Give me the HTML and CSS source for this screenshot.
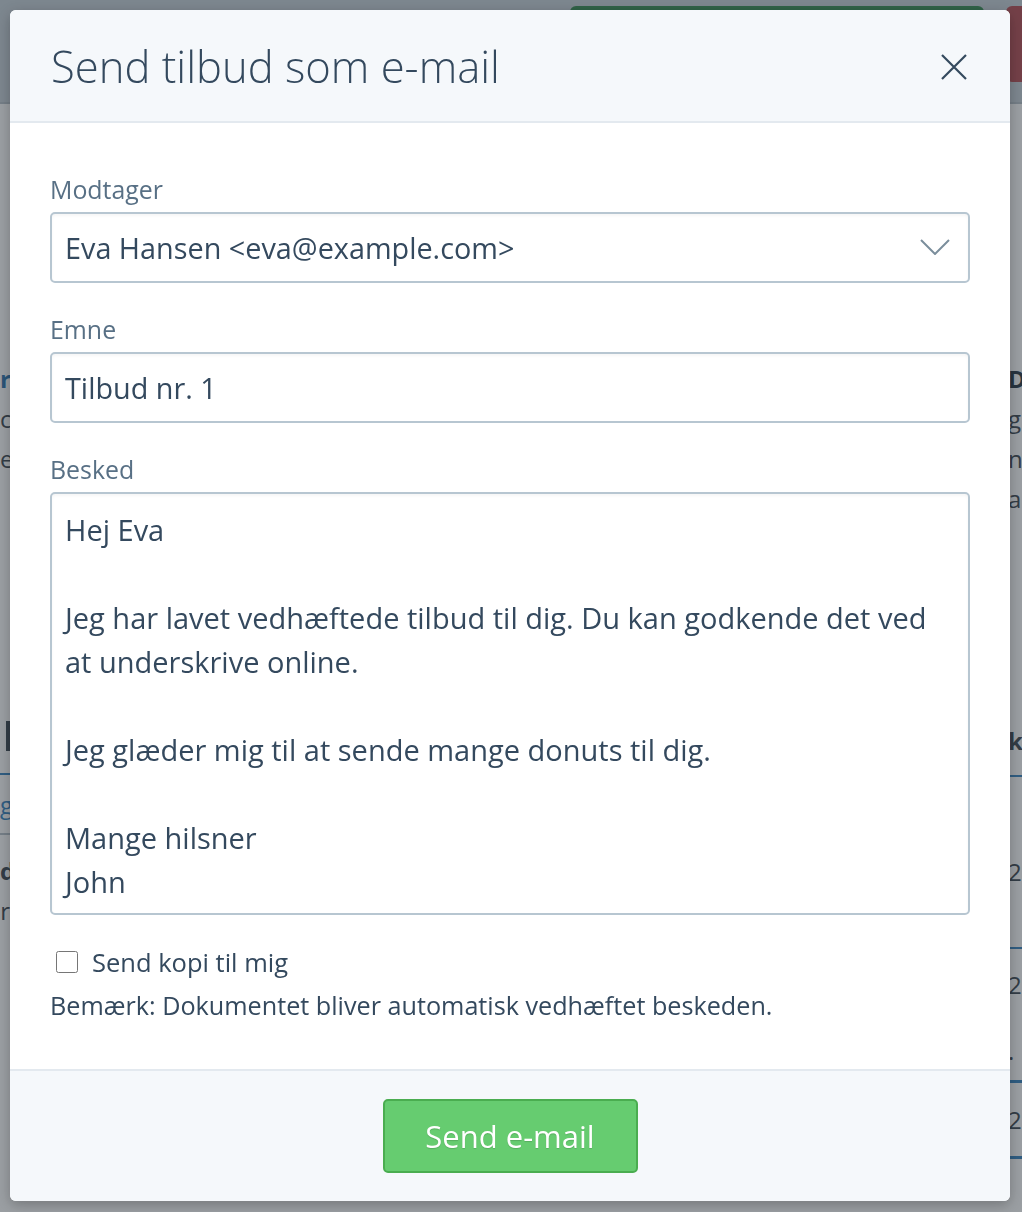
FILE: index.html
```html
<!DOCTYPE html>
<html lang="da">
<head>
  <meta charset="UTF-8">
  <meta name="viewport" content="width=device-width, initial-scale=1.0">
  <title>Send tilbud som e-mail</title>
  <link rel="stylesheet" href="styles.css">
</head>
<body>
  <!-- side bag modalen -->
  <div class="page">
    <div class="topbar">
      <span class="top-btn top-btn-green"></span>
      <span class="top-btn top-btn-red"></span>
    </div>
    <div class="page-main">
      <div class="page-col page-col-left">
        <div class="pg-head">r</div>
        <div class="pg-text">c</div>
        <div class="pg-text">e</div>
        <div class="pg-gap"></div>
        <div class="pg-th"><span class="pg-bar"></span></div>
        <div class="pg-link">g</div>
        <div class="pg-cell">
          <div class="pg-bold">d</div>
          <div>r</div>
        </div>
      </div>
      <div class="page-col page-col-right">
        <div class="pg-head">D</div>
        <div class="pg-text">g</div>
        <div class="pg-text">n</div>
        <div class="pg-text">a</div>
        <div class="pg-gap pg-gap-short"></div>
        <div class="pg-th pg-bold">k</div>
        <div class="pg-row pg-row-first">2</div>
        <div class="pg-row pg-row-mid">2</div>
        <div class="pg-row pg-row-dot">.</div>
        <div class="pg-row pg-row-last">2</div>
      </div>
    </div>
  </div>
  <div class="backdrop"></div>

  <div class="modal-layer">
    <div class="modal" role="dialog" aria-labelledby="modalTitle">
      <div class="modal-header">
        <h1 class="modal-title" id="modalTitle">Send tilbud som e-mail</h1>
        <button class="close-btn" aria-label="Luk">
          <svg width="26" height="26" viewBox="0 0 26 26" fill="none" stroke="currentColor" stroke-width="2.2">
            <path d="M1 1L25 25M25 1L1 25"/>
          </svg>
        </button>
      </div>

      <div class="modal-body">
        <div class="form-group">
          <label class="form-label" for="recipient">Modtager</label>
          <div class="select-wrap">
            <select id="recipient" class="form-control">
              <option>Eva Hansen &lt;eva@example.com&gt;</option>
            </select>
            <svg class="chevron" width="30" height="16" viewBox="0 0 30 16" fill="none" stroke="currentColor" stroke-width="2">
              <path d="M1 1L15 15L29 1"/>
            </svg>
          </div>
        </div>

        <div class="form-group">
          <label class="form-label" for="subject">Emne</label>
          <input id="subject" class="form-control" type="text" value="Tilbud nr. 1">
        </div>

        <div class="form-group">
          <label class="form-label" for="message">Besked</label>
          <textarea id="message" class="form-control form-textarea" rows="9">Hej Eva

Jeg har lavet vedhæftede tilbud til dig. Du kan godkende det ved at underskrive online.

Jeg glæder mig til at sende mange donuts til dig.

Mange hilsner
John</textarea>
        </div>

        <label class="check-row">
          <input type="checkbox" class="check">
          <span>Send kopi til mig</span>
        </label>
        <p class="note">Bemærk: Dokumentet bliver automatisk vedhæftet beskeden.</p>
      </div>

      <div class="modal-footer">
        <button class="send-btn">Send e-mail</button>
      </div>
    </div>
  </div>
</body>
</html>
```

FILE: styles.css
```css
:root {
  --text-color: #34495e;
  --label-color: #587085;
  --border-color: #b7c6d1;
  --header-bg: #f5f8fb;
  --divider: #e3e9ef;
  --green: #66cc70;
  --green-border: #4aad50;
  --page-blue: #3a86c2;
}

* {
  box-sizing: border-box;
  margin: 0;
  padding: 0;
}

html, body {
  width: 100%;
  height: 100%;
  overflow: hidden;
}

body {
  font-family: "Open Sans", Lato, sans-serif;
  font-variant-ligatures: no-common-ligatures;
  color: var(--text-color);
  background: #ffffff;
  -webkit-font-smoothing: antialiased;
}

/* baggrundsside */
.page {
  height: 100%;
}

.topbar {
  height: 104px;
  background: #c8d2da;
  border-bottom: 2px solid #b9c3cb;
  display: flex;
  align-items: flex-start;
  padding-top: 6px;
  padding-left: 570px;
  gap: 22px;
}

.top-btn {
  display: block;
  flex-shrink: 0;
  height: 76px;
  border-radius: 6px;
}

.top-btn-green {
  width: 414px;
  background: #3a8f56;
}

.top-btn-red {
  width: 60px;
  background: #b85158;
}

.page-main {
  display: flex;
  justify-content: space-between;
  padding-top: 255px;
  font-size: 24px;
  line-height: 40px;
  color: #3f4a54;
}

.page-col-left {
  width: 10px;
  text-align: right;
}

.page-col-right {
  width: 14px;
}

.pg-head {
  font-weight: 700;
  color: #2f76b0;
}

.page-col-right .pg-head {
  color: #2b3a48;
}

.pg-gap {
  height: 242px;
}

.pg-gap-short {
  height: 204px;
}

.pg-th {
  height: 54px;
  border-bottom: 2px solid var(--page-blue);
  font-weight: 700;
  display: flex;
  align-items: flex-end;
  justify-content: flex-end;
}

.page-col-right .pg-th {
  justify-content: flex-start;
  padding-bottom: 14px;
}

.pg-bar {
  display: block;
  width: 4px;
  height: 30px;
  background: #3f4a54;
  margin-bottom: 22px;
}

.pg-link {
  color: var(--page-blue);
  height: 60px;
  padding-top: 10px;
  border-bottom: 2px solid #b9c3cb;
}

.pg-cell {
  padding-top: 16px;
}

.pg-bold {
  font-weight: 700;
}

.pg-row {
  display: flex;
  align-items: center;
}

.pg-row-first {
  height: 172px;
  padding-top: 20px;
  border-bottom: 2px solid var(--page-blue);
}

.pg-row-mid {
  height: 72px;
}

.pg-row-dot {
  height: 62px;
  border-bottom: 3px solid var(--page-blue);
}

.pg-row-last {
  height: 76px;
  border-bottom: 3px solid var(--page-blue);
}

.backdrop {
  position: fixed;
  inset: 0;
  background: rgba(38, 46, 54, 0.46);
}

/* modal */
.modal-layer {
  position: fixed;
  inset: 0;
  padding-top: 10px;
}

.modal {
  width: 1000px;
  margin: 0 auto 0 10px;
  background: #ffffff;
  border-radius: 6px;
  overflow: hidden;
  box-shadow: 0 4px 14px rgba(0, 0, 0, 0.25);
}

.modal-header {
  height: 113px;
  background: var(--header-bg);
  border-bottom: 2px solid var(--divider);
  display: flex;
  align-items: center;
  justify-content: space-between;
  padding: 0 43px 0 41px;
}

.modal-title {
  font-size: 43.6px;
  font-weight: 300;
  color: var(--text-color);
}

.close-btn {
  background: none;
  border: none;
  color: #34495e;
  cursor: pointer;
  display: flex;
  padding: 0;
  margin-top: 2px;
}

.modal-body {
  padding: 49px 40px 46px;
}

.form-group {
  margin-bottom: 29px;
}

.form-label {
  display: block;
  font-size: 24.9px;
  line-height: 34px;
  color: var(--label-color);
  margin-bottom: 6px;
}

.form-control {
  display: block;
  width: 100%;
  height: 71px;
  border: 2px solid var(--border-color);
  border-radius: 5px;
  background: #ffffff;
  box-shadow: inset 0 2px 3px rgba(0, 0, 0, 0.04);
  padding: 0 13px;
  font-family: inherit;
  font-size: 28.8px;
  color: var(--text-color);
  outline: none;
}

select.form-control {
  appearance: none;
  -webkit-appearance: none;
}

.select-wrap {
  position: relative;
}

.chevron {
  position: absolute;
  right: 20px;
  top: 27px;
  color: #7b8e9c;
  pointer-events: none;
}

.form-textarea {
  height: 423px;
  padding: 14px 40px 9px 13px;
  font-size: 29px;
  line-height: 44px;
  resize: none;
  overflow: hidden;
}

.check-row {
  display: flex;
  align-items: center;
  gap: 14px;
  font-size: 25.5px;
  line-height: 36px;
  margin-top: 28px;
  padding-left: 6px;
}

.check {
  width: 22px;
  height: 22px;
  margin: 0;
}

.note {
  font-size: 25.2px;
  line-height: 36px;
  margin-top: 7px;
}

.modal-footer {
  background: var(--header-bg);
  border-top: 2px solid var(--divider);
  padding: 28px 0;
  display: flex;
  justify-content: center;
}

.send-btn {
  width: 255px;
  height: 74px;
  background: var(--green);
  border: 2px solid var(--green-border);
  border-radius: 5px;
  color: #ffffff;
  font-family: inherit;
  font-size: 31px;
  text-shadow: 0 1px 1px rgba(0, 0, 0, 0.15);
  cursor: pointer;
}
```
